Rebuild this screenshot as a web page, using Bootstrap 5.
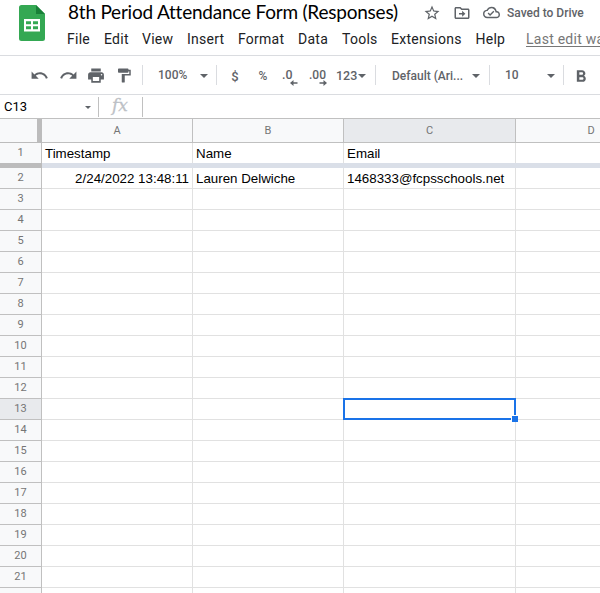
<!DOCTYPE html>
<html lang="en">
<head>
<meta charset="utf-8">
<meta name="viewport" content="width=device-width, initial-scale=1">
<title>8th Period Attendance Form (Responses)</title>
<link href="https://cdn.jsdelivr.net/npm/bootstrap@5.3.0/dist/css/bootstrap.min.css" rel="stylesheet">
<style>
body{font-family:Roboto,sans-serif;width:600px;height:593px;overflow:hidden;background:#fff;color:#202124;line-height:1}
svg{display:block;flex:none;fill:#5f6368}
.app-head{height:56px;border-bottom:1px solid #dadce0}
.logo-box{width:67px;padding:5px 0 0 19px}
.title-row{height:27px}
.doc-title{font:19px/24px Lato,sans-serif;width:356px;padding-left:1px;color:#000;white-space:nowrap;letter-spacing:-.22px}
.status-icons{height:25px}
.saved{font-size:12px;font-weight:500;color:#5f6368;letter-spacing:0;margin-left:7px}
.menus{font-size:14px;line-height:24px;letter-spacing:.25px;white-space:nowrap}
.menus span{flex:none}
.last-edit{color:#777;text-decoration:underline;text-underline-offset:2px}
.tools{height:39px;border-bottom:1px solid #dadce0;font-size:12px;font-weight:500;color:#5f6368;white-space:nowrap}
.tools>*{flex:none}
.rule{width:1px;height:20px;background:#dadce0}
.tri{width:0;height:0;border:4px solid transparent;border-top-color:#5f6368;border-bottom:0;margin-top:1px}
.fbar{height:24px;border-bottom:1px solid #c0c0c0}
.fbar .tri{border-width:3px;border-bottom:0;border-top-width:3px;margin-top:2px}
.fbar .rule{background:#c0c0c0}
.fx-sign{font:italic 17px/20px "DejaVu Serif",serif;color:#bdc1c6;-webkit-text-stroke:.3px #bdc1c6;width:30px;margin-top:-4px}
.sheet-view{width:600px;overflow:hidden}
.sheet{display:grid;grid-template-columns:42px 151px 151px 172px 151px;width:667px;font:13.33px/20px "Liberation Sans",Arial,sans-serif;color:#000}
.sheet>div{height:21px;border-right:1px solid #e1e1e1;border-bottom:1px solid #e1e1e1;padding:1px 3px 0;white-space:nowrap}
.sheet>.hd{background:#f8f9fa;border-color:#c0c0c0;color:#757575;font:11px/19px Roboto,sans-serif;text-align:center;padding-top:0}
.sheet>.hd.active{background:#e8eaed}
.sheet>.col-hd{height:24px;line-height:23px}
.sheet>.corner{box-shadow:inset -4px 0 #bcbcbc;border-color:#bcbcbc}
.sheet>.first{border-bottom:0;height:20px;line-height:21px;padding-top:0}
.sheet>.hd.first{line-height:19px}
.sheet>.freeze{height:5px;border:0;background:#dadfe8;grid-column:2/6;padding:0}
.sheet>.freeze-hd{height:5px;border:0;background:#bcbcbc;padding:0}
.sheet>.cursor{position:relative;overflow:visible}
.cursor::before{content:"";position:absolute;inset:-1px -1px -1px -1px;border:2px solid #1a73e8}
.cursor::after{content:"";position:absolute;right:-3px;bottom:-3px;width:7px;height:7px;background:#1a73e8;border:1px solid #fff;border-right-width:0;border-bottom-width:0}
</style>
<script src="https://cdn.jsdelivr.net/npm/bootstrap@5.3.0/dist/js/bootstrap.bundle.min.js"></script>
</head>
<body>
<header class="app-head d-flex overflow-hidden">
  <div class="logo-box flex-shrink-0">
    <svg width="26" height="36" viewBox="0 0 26 36"><path fill="#34a853" d="M2.500 0H17l9 9v24.500a2.500 2.500 0 0 1-2.500 2.500h-21A2.500 2.500 0 0 1 0 33.500v-31A2.500 2.500 0 0 1 2.500 0z"/><path fill="#188038" d="M17 0l9 9h-9z"/><path fill="#fff" fill-rule="evenodd" d="M5 14h16v12.500H5zM7 16.200v3h5v-3zm7 0v3h5v-3zM7 21.300v3h5v-3zm7 0v3h5v-3z"/></svg>
  </div>
  <div class="flex-shrink-0">
    <div class="title-row d-flex">
      <div class="doc-title">8th Period Attendance Form (Responses)</div>
      <div class="status-icons d-flex align-items-center">
        <svg width="18" height="18" viewBox="0 0 24 24"><path d="M22 9.240l-7.190-.62L12 2 9.190 8.630 2 9.240l5.460 4.730L5.820 21 12 17.270 18.180 21l-1.630-7.030L22 9.240zM12 15.400l-3.760 2.270 1-4.280-3.320-2.880 4.380-.38L12 6.100l1.710 4.040 4.380.38-3.320 2.880 1 4.280L12 15.400z"/></svg>
        <svg class="ms-2 ps-1" width="22" height="18" viewBox="0 0 24 24"><path d="M20 6h-8l-2-2H4c-1.100 0-2 .9-2 2v12c0 1.100.9 2 2 2h16c1.100 0 2-.9 2-2V8c0-1.100-.9-2-2-2zm0 12H4V6h5.200l2 2H20v10zM12.200 17l4.300-4-4.300-4v3H8v2h4.200z"/></svg>
        <svg class="ms-2 ps-1" width="21" height="17" viewBox="0 0 24 24"><path d="M19.350 10.040A7.490 7.490 0 0 0 12 4C9.110 4 6.600 5.640 5.350 8.040A5.994 5.994 0 0 0 0 14c0 3.310 2.690 6 6 6h13c2.760 0 5-2.240 5-5 0-2.640-2.050-4.780-4.650-4.960zM19 18H6c-2.210 0-4-1.790-4-4 0-2.050 1.530-3.760 3.560-3.970l1.070-.11.5-.95A5.469 5.469 0 0 1 12 6c2.620 0 4.880 1.860 5.390 4.430l.3 1.500 1.530.11A2.980 2.980 0 0 1 22 15c0 1.650-1.350 3-3 3zm-9-3.820l-2.090-2.090L6.500 13.500 10 17l6.010-6.010-1.410-1.410z"/></svg>
        <span class="saved text-nowrap">Saved to Drive</span>
      </div>
    </div>
    <nav class="menus d-flex">
      <span style="width:37px">File</span><span style="width:38px">Edit</span><span style="width:45px">View</span><span style="width:51px">Insert</span><span style="width:60px">Format</span><span style="width:44px">Data</span><span style="width:49px">Tools</span><span style="width:84.500px">Extensions</span><span style="width:50.500px">Help</span><span class="last-edit">Last edit was</span>
    </nav>
  </div>
</header>

<div class="tools d-flex align-items-center">
  <div style="width:30px"></div>
  <div style="width:29px"><svg width="19" height="19" viewBox="0 0 24 24"><path d="M12.500 8c-2.650 0-5.050.99-6.900 2.600L2 7v9h9l-3.620-3.620c1.390-1.160 3.160-1.880 5.120-1.880 3.540 0 6.550 2.310 7.600 5.500l2.370-.78C21.080 11.030 17.150 8 12.500 8z"/></svg></div>
  <div style="width:27px"><svg width="19" height="19" viewBox="0 0 24 24"><path d="M18.400 10.600C16.550 8.990 14.150 8 11.500 8c-4.650 0-8.580 3.030-9.960 7.220L3.900 16c1.050-3.190 4.050-5.500 7.600-5.500 1.950 0 3.730.72 5.120 1.880L13 16h9V7l-3.600 3.600z"/></svg></div>
  <div style="width:29px"><svg width="20" height="19" viewBox="0 0 24 24"><path d="M19 8H5c-1.660 0-3 1.340-3 3v6h4v4h12v-4h4v-6c0-1.660-1.340-3-3-3zm-3 11H8v-5h8v5zm3-7c-.55 0-1-.45-1-1s.45-1 1-1 1 .45 1 1-.45 1-1 1zm-1-9H6v4h12V3z"/></svg></div>
  <div style="width:27px"><svg width="18" height="17" viewBox="0 0 24 24" preserveAspectRatio="none"><path d="M18 4V3c0-.55-.45-1-1-1H5c-.55 0-1 .45-1 1v4c0 .55.45 1 1 1h12c.55 0 1-.45 1-1V6h1v4H9v11c0 .55.45 1 1 1h2c.55 0 1-.45 1-1v-9h8V4h-3z"/></svg></div>
  <div class="rule"></div>
  <div style="width:57px;padding-left:15px">100%</div><div class="tri"></div><div style="width:8px"></div>
  <div class="rule"></div>
  <div class="text-center" style="width:36px;font-size:13px;padding-top:2px">$</div>
  <div class="text-center" style="width:20px;padding-top:2px">%</div>
  <div style="width:9px"></div>
  <div style="width:27px"><svg width="18" height="21" viewBox="0 0 18 21"><text x="0" y="14" font-size="13.500" font-weight="500" textLength="10.500" lengthAdjust="spacingAndGlyphs">.0</text><path d="M8 18l3.500-3v2.200H15.500v1.600h-4V21z"/></svg></div>
  <div style="width:27px"><svg width="20" height="21" viewBox="0 0 20 21"><text x="0" y="14" font-size="13.500" font-weight="500" textLength="17" lengthAdjust="spacingAndGlyphs">.00</text><path d="M18 18L14.500 15v2.200h-4v1.600h4V21z"/></svg></div>
  <div style="width:22px;font-size:12.500px;padding-top:2px">123</div><div class="tri"></div><div style="width:9px"></div>
  <div class="rule"></div>
  <div style="width:96px;padding-left:16px;padding-top:2px">Default (Ari...</div><div class="tri"></div><div style="width:9px"></div>
  <div class="rule"></div>
  <div style="width:57px;padding-left:15px">10</div><div class="tri"></div><div style="width:8px"></div>
  <div class="rule"></div>
  <svg style="margin:2px 0 0 7px" width="20" height="20" viewBox="0 0 24 24"><path d="M15.600 11.790c.97-.67 1.650-1.770 1.650-2.790 0-2.260-1.750-4-4-4H7v14h7.040c2.090 0 3.710-1.700 3.710-3.790 0-1.520-.86-2.820-2.150-3.420zM10 7.500h3c.83 0 1.500.67 1.500 1.500s-.67 1.500-1.500 1.500h-3v-3zm3.500 9H10v-3h3.500c.83 0 1.500.67 1.500 1.500s-.67 1.500-1.500 1.500z"/></svg>
</div>

<div class="fbar d-flex align-items-center">
  <div style="width:85px;padding-left:4px;font-size:13px;color:#000">C13</div><div class="tri"></div><div style="width:7px"></div>
  <div class="rule"></div>
  <div style="width:13px"></div><div class="fx-sign">fx</div>
  <div class="rule"></div>
</div>

<div class="sheet-view"><main class="sheet" id="sheet"></main></div>

<script>
const sheet = document.getElementById('sheet');
const add = (cls, text = '') => {
  const cell = document.createElement('div');
  cell.className = cls;
  cell.textContent = text;
  sheet.append(cell);
};
const values = {1: ['Timestamp', 'Name', 'Email', ''], 2: ['2/24/2022 13:48:11', 'Lauren Delwiche', '1468333@fcpsschools.net', '']};
add('hd col-hd corner');
['A', 'B', 'C', 'D'].forEach(c => add('hd col-hd' + (c === 'C' ? ' active' : ''), c));
for (let r = 1; r <= 22; r++) {
  const first = r === 1 ? ' first' : '';
  add('hd' + first + (r === 13 ? ' active' : ''), r < 22 ? r : '');
  for (let c = 0; c < 4; c++) {
    add('cell' + first + (r === 13 && c === 2 ? ' cursor' : '') + (r === 2 && c === 0 ? ' text-end' : ''), (values[r] || [])[c]);
  }
  if (r === 1) { add('freeze-hd'); add('freeze'); }
}
</script>
</body>
</html>
